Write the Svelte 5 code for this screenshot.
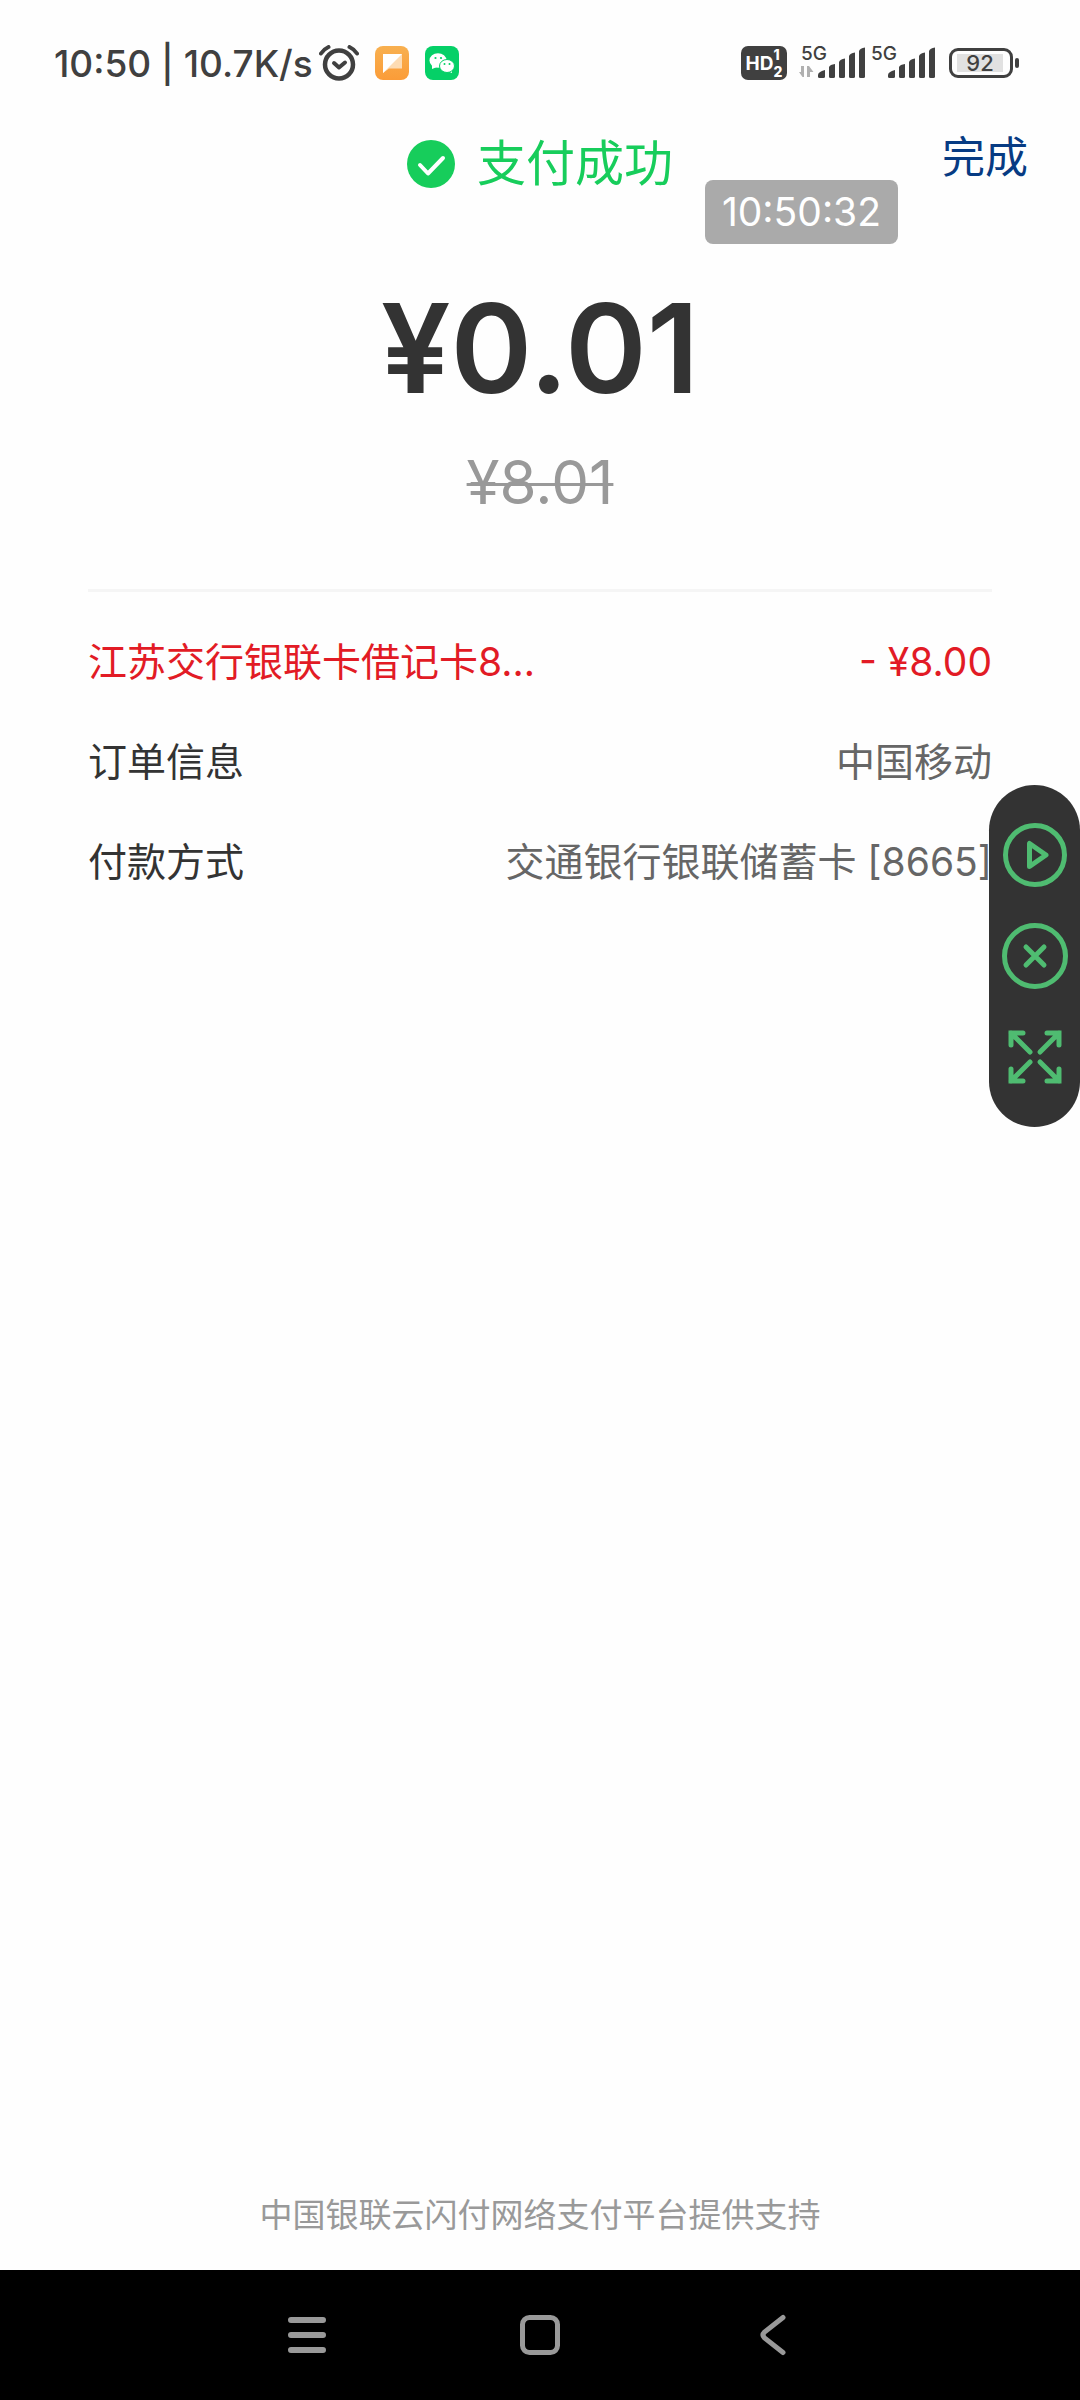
<script lang="ts">
  interface DetailRow {
    label: string;
    value: string;
    discount?: boolean;
  }

  const rows: DetailRow[] = [
    { label: '江苏交行银联卡借记卡8...', value: '- ¥8.00', discount: true },
    { label: '订单信息', value: '中国移动' },
    { label: '付款方式', value: '交通银行银联储蓄卡 [8665]' }
  ];

  const signals = [{ data: true }, { data: false }];
</script>

<div class="screen">
  <div class="status-bar">
    <div class="status-left">
      <span class="status-text">10:50 | 10.7K/s</span>
      <svg class="alarm" width="40" height="36" viewBox="0 0 40 36" fill="none" stroke="#404040" stroke-linecap="round">
        <circle cx="20" cy="19.5" r="14" stroke-width="4.500" />
        <path d="M2 8.500Q5 4 9.500 2M38 8.500Q35 4 30.500 2" stroke-width="4" />
        <path d="M15 18l5 4.500 6-5" stroke-width="4" stroke-linejoin="round" />
      </svg>
      <svg class="app-icon" width="34" height="34" viewBox="0 0 34 34">
        <defs>
          <linearGradient id="note" x1="0" y1="0" x2="0" y2="1">
            <stop offset="0" stop-color="#f8b050" />
            <stop offset="1" stop-color="#fb9c38" />
          </linearGradient>
        </defs>
        <rect width="34" height="34" rx="8" fill="url(#note)" />
        <path d="M8 8h19v14.500H14L8 27z" fill="#fddcb4" />
        <path d="M8 8h19L8 27z" fill="#fff" />
      </svg>
      <svg class="app-icon" width="34" height="34" viewBox="0 0 34 34">
        <rect width="34" height="34" rx="8" fill="#05d067" />
        <path d="M7 17v6l5-2z" fill="#fff" />
        <ellipse cx="13" cy="14.5" rx="8.500" ry="7.300" fill="#fff" />
        <path d="M27 21v6l-5-2z" fill="#fff" />
        <ellipse cx="22" cy="20" rx="7.500" ry="6.500" fill="#fff" stroke="#05d067" stroke-width="1" />
        <g fill="#05d067">
          <circle cx="10.500" cy="12" r="1.100" />
          <circle cx="16" cy="12" r="1.100" />
          <circle cx="19.500" cy="18" r="1" />
          <circle cx="24.500" cy="18" r="1" />
        </g>
      </svg>
    </div>

    <div class="status-right">
      <span class="hd">
        <b>HD</b>
        <span class="hd-sims"><i>1</i><i>2</i></span>
      </span>
      {#each signals as signal}
        <span class="signal">
          <span class="net">5G</span>
          <svg width="66" height="32" viewBox="0 0 66 32">
            {#if signal.data}
              <path d="M5 19v11h-1.500L0 25h2v-6zM8 30V19h2l4.500 6H11v5z" fill="#b0b0b0" />
            {/if}
            <g fill="#404040">
              <path d="M19 28q0-3 7-5v6.500q0 1.500-1.500 1.500H20.500q-1.500 0-1.500-1.500z" />
              <path d="M30 20q1-2.500 6-3v12.500q0 1.500-1.500 1.500h-3q-1.500 0-1.500-1.500z" />
              <path d="M40 15q1-3 6-3.500v18q0 1.500-1.500 1.500h-3q-1.500 0-1.500-1.500z" />
              <path d="M50 9q1-3 6-3.500v24q0 1.500-1.500 1.500h-3q-1.500 0-1.500-1.500z" />
              <path d="M60 4q1-3 6-3.500v29q0 1.500-1.500 1.500h-3q-1.500 0-1.500-1.500z" />
            </g>
          </svg>
        </span>
      {/each}
      <span class="battery"><span class="level">92</span></span>
    </div>
  </div>

  <header>
    <h1>
      <svg width="48" height="48" viewBox="0 0 48 48" fill="none">
        <circle cx="24" cy="24" r="24" fill="#17cd5b" />
        <path d="M13 25l8 8.500L36 18" stroke="#fff" stroke-width="4" stroke-linecap="round" stroke-linejoin="round" />
      </svg>
      支付成功
    </h1>
    <button class="done" type="button">完成</button>
    <time class="clock">10:50:32</time>
  </header>

  <main>
    <div class="amount">¥0.01</div>
    <del class="original">¥8.01</del>

    <dl>
      {#each rows as row}
        <div class="row" class:discount={row.discount}>
          <dt>{row.label}</dt>
          <dd>{row.value}</dd>
        </div>
      {/each}
    </dl>
  </main>

  <footer>中国银联云闪付网络支付平台提供支持</footer>

  <nav>
    <button type="button" aria-label="Recent apps">
      <svg width="42" height="42" viewBox="0 0 42 42" fill="none" stroke="#999" stroke-width="6" stroke-linecap="round">
        <path d="M5 6h32M5 21h32M5 36h32" />
      </svg>
    </button>
    <button type="button" aria-label="Home">
      <svg width="42" height="42" viewBox="0 0 42 42" fill="none" stroke="#999" stroke-width="5">
        <rect x="3.500" y="3.500" width="35" height="35" rx="7" />
      </svg>
    </button>
    <button type="button" aria-label="Back">
      <svg width="42" height="42" viewBox="0 0 42 42" fill="none" stroke="#999" stroke-width="5" stroke-linecap="round">
        <path d="M31 3.500L12.500 18q-3 3 0 6L31 38.500" />
      </svg>
    </button>
  </nav>

  <div class="toolbar">
    <button type="button" aria-label="Play">
      <svg width="66" height="66" viewBox="0 0 66 66" fill="none" stroke="#4fbc71" stroke-width="5" stroke-linejoin="round">
        <circle cx="33" cy="33" r="29.500" />
        <path d="M27.500 21.500v23L44 33z" />
      </svg>
    </button>
    <button type="button" aria-label="Close">
      <svg width="66" height="66" viewBox="0 0 66 66" fill="none" stroke="#4fbc71" stroke-width="5" stroke-linecap="round">
        <circle cx="33" cy="33" r="30.500" />
        <path d="M24 24l18 18M42 24L24 42" />
      </svg>
    </button>
    <button type="button" aria-label="Expand">
      <svg width="66" height="66" viewBox="0 0 66 66" fill="none" stroke="#4fbc71" stroke-width="5" stroke-linecap="round">
        <path d="M9 21V9h12M9 9l19 19" />
        <path d="M45 9h12v12M57 9L38 28" />
        <path d="M9 45v12h12M9 57l19-19" />
        <path d="M45 57h12V45M57 57L38 38" />
      </svg>
    </button>
  </div>
</div>

<style>
  :global(body) {
    background: #fefefe;
  }

  .screen {
    position: relative;
    display: flex;
    flex-direction: column;
    min-height: 100vh;
    font-family: Inter, 'Noto Sans CJK SC', sans-serif;
    color: #333;
  }

  svg {
    display: block;
    flex: none;
  }

  button {
    padding: 0;
    border: none;
    background: none;
    font-family: inherit;
    cursor: pointer;
  }

  .status-bar {
    display: flex;
    justify-content: space-between;
    align-items: center;
    height: 126px;
    padding: 0 67px 0 54px;
    color: #404040;
  }

  .status-left,
  .status-right {
    display: flex;
    align-items: center;
  }

  .status-text {
    font-size: 37px;
    font-weight: 500;
    white-space: pre;
  }

  .alarm {
    margin-left: 6px;
  }

  .app-icon {
    margin-left: 16px;
  }

  .hd {
    display: flex;
    align-items: center;
    justify-content: center;
    width: 46px;
    height: 34px;
    margin-right: 12px;
    border-radius: 7px;
    background: #404040;
    color: #fff;
    font-size: 19px;
  }

  .hd-sims {
    display: flex;
    flex-direction: column;
    font-size: 14px;
    font-weight: 800;
    line-height: 17px;
  }

  .hd-sims i {
    font-style: normal;
  }

  .signal {
    position: relative;
    margin-right: 4px;
  }

  .net {
    position: absolute;
    top: -3px;
    left: 2px;
    font-size: 19px;
    font-weight: 500;
    line-height: 20px;
  }

  .battery {
    position: relative;
    box-sizing: border-box;
    width: 64px;
    height: 30px;
    margin-left: 10px;
    padding: 3px 5px;
    border: 3px solid #404040;
    border-radius: 9px;
  }

  .battery::after {
    content: '';
    position: absolute;
    top: 7px;
    right: -9px;
    width: 4px;
    height: 10px;
    border-radius: 2px;
    background: #404040;
  }

  .level {
    display: block;
    width: 46px;
    background: #e1e1e1;
    font-size: 22px;
    font-weight: 500;
    line-height: 18px;
    text-align: center;
  }

  header {
    position: relative;
    display: grid;
    grid-template-columns: 1fr auto 1fr;
    align-items: start;
    padding: 0 52px;
  }

  h1 {
    grid-column: 2;
    display: flex;
    align-items: center;
    gap: 22px;
    margin: 0;
    color: #17cd5b;
    font-size: 49px;
    font-weight: 400;
    line-height: 76px;
  }

  .done {
    justify-self: end;
    color: #073b83;
    font-size: 43px;
    line-height: 62px;
  }

  .clock {
    position: absolute;
    top: 54px;
    right: 182px;
    padding: 0 17px;
    border-radius: 8px;
    background: #aaa;
    color: #fff;
    font-size: 39px;
    line-height: 64px;
  }

  main {
    flex: 1;
    padding: 76px 88px 0;
    text-align: center;
  }

  .amount {
    font-size: 124px;
    font-weight: 600;
    line-height: 140px;
  }

  .original {
    display: block;
    margin-top: 28px;
    color: #999;
    font-size: 60px;
    line-height: 72px;
    text-decoration-thickness: 3px;
  }

  dl {
    display: flex;
    flex-direction: column;
    gap: 40px;
    margin: 71px 0 0;
    padding-top: 40px;
    border-top: 3px solid #f5f5f5;
    font-size: 39px;
    line-height: 60px;
  }

  .row {
    display: flex;
    justify-content: space-between;
    white-space: nowrap;
  }

  dd {
    margin: 0;
    color: #666;
  }

  .discount,
  .discount dd {
    color: #e21b25;
  }

  footer {
    padding-bottom: 30px;
    color: #999;
    font-size: 33px;
    line-height: 50px;
    text-align: center;
  }

  nav {
    display: flex;
    justify-content: center;
    align-items: center;
    gap: 191px;
    height: 130px;
    background: #000;
  }

  .toolbar {
    position: absolute;
    top: 785px;
    right: 0;
    display: flex;
    flex-direction: column;
    align-items: center;
    gap: 35px;
    width: 91px;
    padding: 37px 0;
    border-radius: 46px;
    background: #333;
  }
</style>
